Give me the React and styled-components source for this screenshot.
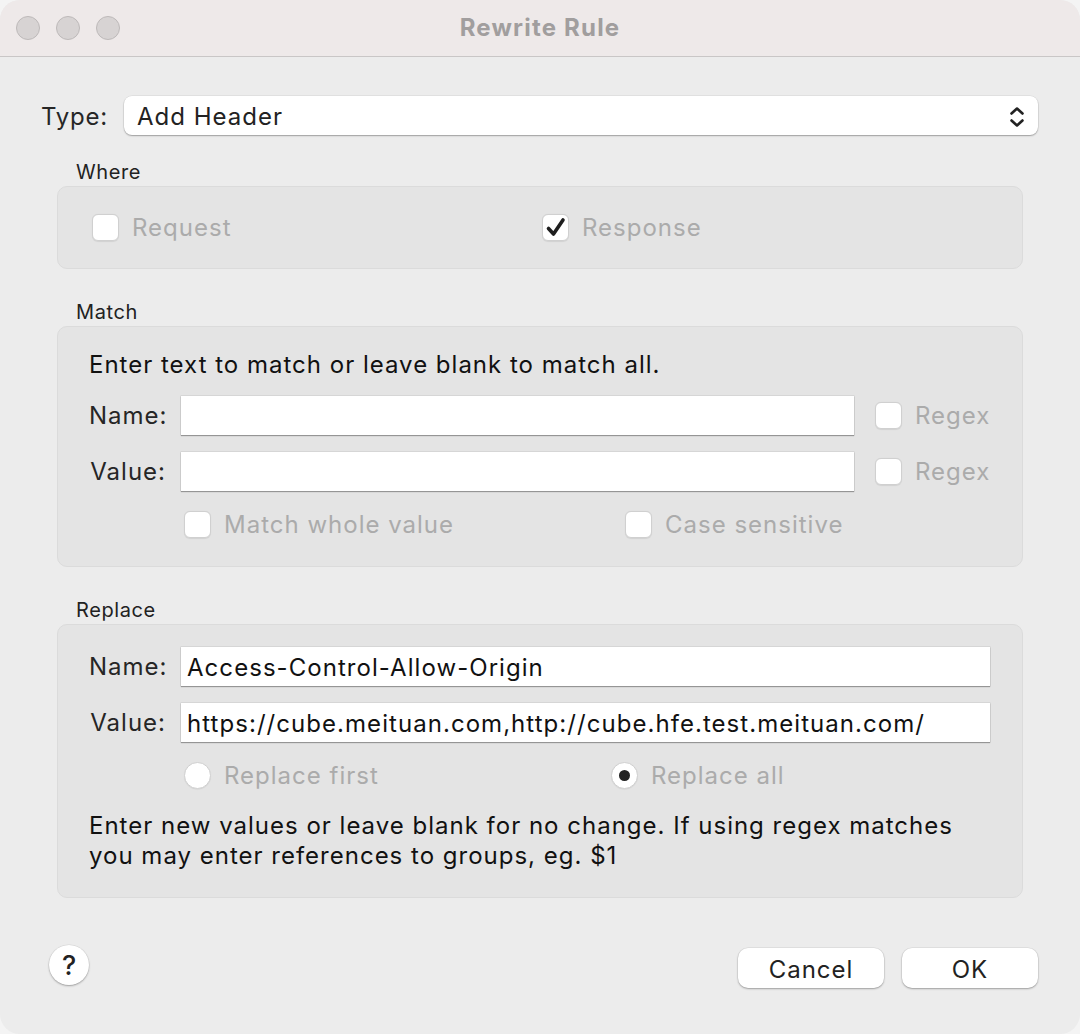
import React from 'react';
import styled, { createGlobalStyle } from 'styled-components';

const GlobalStyle = createGlobalStyle`
  html, body {
    margin: 0;
    padding: 0;
    background: #f4f4f4;
  }
  * {
    box-sizing: border-box;
  }
  body {
    font-family: "Inter", "Noto Sans", sans-serif;
    color: #262626;
  }
`;

const Window = styled.div`
  width: 1080px;
  height: 1034px;
  background: #ececec;
  border-radius: 20px;
  overflow: hidden;
  display: flex;
  flex-direction: column;
`;

const TitleBar = styled.div`
  height: 57px;
  flex-shrink: 0;
  background: #eee9e9;
  border-bottom: 1px solid #c9c6c6;
  display: grid;
  grid-template-columns: 1fr auto 1fr;
  align-items: center;
  padding: 0 16px;
`;

const Lights = styled.div`
  display: flex;
  gap: 16px;
`;

const Light = styled.span`
  width: 24px;
  height: 24px;
  border-radius: 50%;
  background: #d7d3d3;
  border: 1px solid #bdb9b9;
`;

const Title = styled.div`
  font-size: 24px;
  font-weight: 700;
  color: #a19e9e;
  letter-spacing: 1.2px;
  margin-top: -2px;
`;

const Body = styled.div`
  flex: 1;
  padding: 39px 42px 0 41px;
  display: flex;
  flex-direction: column;
`;

const TypeRow = styled.div`
  display: flex;
  align-items: center;
  height: 39px;
`;

const TypeLabel = styled.span`
  font-size: 24px;
  letter-spacing: 0.8px;
  width: 83px;
  margin-top: 2px;
`;

const Select = styled.div`
  flex: 1;
  height: 39px;
  background: #fff;
  border-radius: 8px;
  box-shadow: 0 1px 1.5px rgba(0, 0, 0, 0.3), 0 0 0 0.5px rgba(0, 0, 0, 0.08);
  display: flex;
  align-items: center;
  justify-content: space-between;
  padding: 2px 12px 0 13px;
  font-size: 24px;
  letter-spacing: 1px;
  color: #222;
`;

const Section = styled.div`
  margin: 0 15px 0 16px;
`;

const SectionLabel = styled.div`
  font-size: 20px;
  letter-spacing: 0.6px;
  height: 27px;
  line-height: 27px;
  padding-left: 19px;
  margin-top: ${(p) => p.$top}px;
  color: #222;
`;

const GroupBox = styled.div`
  background: #e4e4e4;
  border: 1px solid #dbdbdb;
  border-radius: 10px;
  padding: ${(p) => p.$pad};
  display: flex;
  flex-direction: column;
`;

const Line = styled.div`
  display: grid;
  grid-template-columns: ${(p) => p.$cols};
  align-items: center;
  margin-top: ${(p) => p.$top || 0}px;
`;

const FieldLabel = styled.span`
  font-size: 24px;
  line-height: 27px;
  letter-spacing: 1px;
  text-align: right;
  padding-right: 15px;
  color: #262626;
`;

const Input = styled.div`
  height: 39px;
  background: #fff;
  box-shadow: 0 1px 1px rgba(0, 0, 0, 0.3), 0 0 0 0.5px rgba(0, 0, 0, 0.12);
  display: flex;
  align-items: center;
  padding: 2px 0 0 6px;
  font-size: 24px;
  letter-spacing: 1.05px;
  color: #111;
  white-space: nowrap;
  overflow: hidden;
`;

const Option = styled.label`
  display: flex;
  align-items: center;
  gap: 13px;
  height: 27px;
  line-height: 27px;
  font-size: 24px;
  letter-spacing: 1px;
  color: #ababab;
  margin-left: ${(p) => p.$left || 0}px;
`;

const Box = styled.span`
  width: 27px;
  height: 27px;
  border-radius: ${(p) => (p.$round ? '50%' : '6px')};
  background: #fff;
  border: 1px solid #d0d0d0;
  box-shadow: 0 0.5px 1px rgba(0, 0, 0, 0.08);
  display: flex;
  align-items: center;
  justify-content: center;
  flex-shrink: 0;
`;

const Dot = styled.span`
  width: 11px;
  height: 11px;
  border-radius: 50%;
  background: #222;
`;

const Text = styled.p`
  margin: ${(p) => p.$top || 0}px 0 0;
  font-size: 24px;
  line-height: 30px;
  letter-spacing: 1px;
  color: #111;
`;

const Footer = styled.div`
  margin-top: 50px;
  display: flex;
  align-items: center;
  padding-left: 8px;
`;

const Help = styled.button`
  width: 40px;
  height: 40px;
  margin-top: -6px;
  border-radius: 50%;
  border: none;
  background: #fff;
  box-shadow: 0 1px 2px rgba(0, 0, 0, 0.3), 0 0 0 0.5px rgba(0, 0, 0, 0.08);
  font-family: "Inter", sans-serif;
  font-size: 27px;
  font-weight: 500;
  color: #222;
  padding: 0;
`;

const Spacer = styled.div`
  flex: 1;
`;

const Button = styled.button`
  width: ${(p) => p.$w}px;
  height: 40px;
  margin-left: ${(p) => p.$left || 0}px;
  border: none;
  border-radius: 10px;
  background: #fff;
  box-shadow: 0 1px 2px rgba(0, 0, 0, 0.3), 0 0 0 0.5px rgba(0, 0, 0, 0.08);
  font-family: "Inter", sans-serif;
  font-size: 24px;
  letter-spacing: 1px;
  color: #222;
  padding: 2px 0 0;
`;

const Check = () => (
  <svg width="22" height="22" viewBox="0 0 22 22">
    <path d="M3.5 11.5 L8.5 17 L18 3" fill="none" stroke="#1e1e1e" strokeWidth="3.6" strokeLinecap="round" strokeLinejoin="round" />
  </svg>
);

const Chevrons = () => (
  <svg width="18" height="24" viewBox="0 0 18 24">
    <path d="M3.5 8.5 L9 3.5 L14.5 8.5 M3.5 15.5 L9 20.5 L14.5 15.5" fill="none" stroke="#222" strokeWidth="2.6" strokeLinecap="round" strokeLinejoin="round" />
  </svg>
);

const CheckOption = ({ checked, label, left }) => (
  <Option $left={left}>
    <Box>{checked && <Check />}</Box>
    {label}
  </Option>
);

const RadioOption = ({ selected, label, left }) => (
  <Option $left={left}>
    <Box $round>{selected && <Dot />}</Box>
    {label}
  </Option>
);

export default function App() {
  return (
    <>
      <GlobalStyle />
      <Window>
        <TitleBar>
          <Lights>
            <Light />
            <Light />
            <Light />
          </Lights>
          <Title>Rewrite Rule</Title>
          <div />
        </TitleBar>
        <Body>
          <TypeRow>
            <TypeLabel>Type:</TypeLabel>
            <Select>
              Add Header
              <Chevrons />
            </Select>
          </TypeRow>

          <Section>
            <SectionLabel $top={24}>Where</SectionLabel>
            <GroupBox $pad="27px 34px">
              <Line $cols="450px 1fr">
                <CheckOption label="Request" />
                <CheckOption checked label="Response" />
              </Line>
            </GroupBox>

            <SectionLabel $top={30}>Match</SectionLabel>
            <GroupBox $pad="23px 35px 28px 31px">
              <Text>Enter text to match or leave blank to match all.</Text>
              <Line $cols="92px 1fr 133px" $top={16}>
                <FieldLabel>Name:</FieldLabel>
                <Input />
                <CheckOption label="Regex" left={21} />
              </Line>
              <Line $cols="92px 1fr 133px" $top={17}>
                <FieldLabel>Value:</FieldLabel>
                <Input />
                <CheckOption label="Regex" left={21} />
              </Line>
              <Line $cols="95px 441px 1fr" $top={20}>
                <span />
                <CheckOption label="Match whole value" />
                <CheckOption label="Case sensitive" />
              </Line>
            </GroupBox>

            <SectionLabel $top={30}>Replace</SectionLabel>
            <GroupBox $pad="22px 32px 26px 31px">
              <Line $cols="92px 1fr">
                <FieldLabel>Name:</FieldLabel>
                <Input>Access-Control-Allow-Origin</Input>
              </Line>
              <Line $cols="92px 1fr" $top={17}>
                <FieldLabel>Value:</FieldLabel>
                <Input>https://cube.meituan.com,http://cube.hfe.test.meituan.com/</Input>
              </Line>
              <Line $cols="95px 427px 1fr" $top={20}>
                <span />
                <RadioOption label="Replace first" />
                <RadioOption selected label="Replace all" />
              </Line>
              <Text $top={22}>
                Enter new values or leave blank for no change. If using regex matches
                <br />
                you may enter references to groups, eg. $1
              </Text>
            </GroupBox>
          </Section>

          <Footer>
            <Help>?</Help>
            <Spacer />
            <Button $w={146}>Cancel</Button>
            <Button $w={136} $left={18}>OK</Button>
          </Footer>
        </Body>
      </Window>
    </>
  );
}
